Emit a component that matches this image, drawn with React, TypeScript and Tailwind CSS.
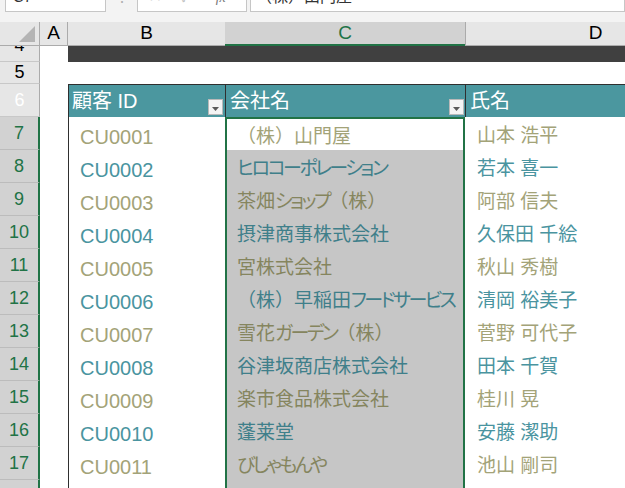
import React from 'react';

type Row = { id: string; company: string; name: string };

const rows: Row[] = [
  { id: 'CU0001', company: '（株）山門屋', name: '山本 浩平' },
  { id: 'CU0002', company: 'ヒロコーポレーション', name: '若本 喜一' },
  { id: 'CU0003', company: '茶畑ショップ（株）', name: '阿部 信夫' },
  { id: 'CU0004', company: '摂津商事株式会社', name: '久保田 千絵' },
  { id: 'CU0005', company: '宮株式会社', name: '秋山 秀樹' },
  { id: 'CU0006', company: '（株）早稲田フードサービス', name: '清岡 裕美子' },
  { id: 'CU0007', company: '雪花ガーデン（株）', name: '菅野 可代子' },
  { id: 'CU0008', company: '谷津坂商店株式会社', name: '田本 千賀' },
  { id: 'CU0009', company: '楽市食品株式会社', name: '桂川 晃' },
  { id: 'CU0010', company: '蓬莱堂', name: '安藤 潔助' },
  { id: 'CU0011', company: 'びしゃもんや', name: '池山 剛司' },
  { id: '', company: '', name: '' },
];

// kana gets proportional widths, like the UI font in the screenshot
function Jp({ text }: { text: string }) {
  const parts = text.split(/([\u3040-\u30FF]+)/);
  return (
    <>
      {parts.map((p, i) =>
        /[\u3040-\u30FF]/.test(p) ? (
          <span key={i} className="[font-feature-settings:'palt'] tracking-[-2.5px]">
            {p}
          </span>
        ) : (
          <React.Fragment key={i}>{p}</React.Fragment>
        )
      )}
    </>
  );
}

function FilterButton() {
  return (
    <div className="self-end mb-[2px] w-[15px] h-[16px] bg-[#f4f4f4] border border-[#b9b9b9] flex items-center justify-center shrink-0">
      <svg width="7" height="4" viewBox="0 0 7 4" className="mt-[3px]">
        <path d="M0 0h7L3.5 4z" fill="#595959" />
      </svg>
    </div>
  );
}

function FormulaBar() {
  return (
    <div className="h-[12px] overflow-hidden bg-[#f3f3f3]">
      <div className="-mt-[18px] h-[30px] flex">
        <div className="ml-[5px] w-[101px] bg-white border border-[#c6c6c6] flex items-center justify-between pl-[7px] pr-[6px]">
          <span className="text-[15px] text-[#333]">C7</span>
          <svg width="7" height="4" viewBox="0 0 7 4">
            <path d="M0 0h7L3.5 4z" fill="#777" />
          </svg>
        </div>
        <div className="w-[31px] flex items-center justify-center text-[16px] text-[#b0b0b0]">⋮</div>
        <div className="w-[110px] bg-white border border-[#c6c6c6] flex items-center text-[#c4c4c4]">
          <span className="ml-[10px] text-[17px]">✕</span>
          <span className="ml-[18px] text-[17px]">✓</span>
          <span className="ml-[24px] text-[14px] italic font-['Liberation_Serif',serif] text-[#777]">fx</span>
        </div>
        <div className="ml-[3px] flex-1 bg-white border border-[#c6c6c6] flex items-center pl-[5px] text-[16px] text-[#333]">
          （株）山門屋
        </div>
      </div>
    </div>
  );
}

function ColumnHeaders() {
  return (
    <div className="flex h-[24px] bg-[#e6e6e6] text-[19px]">
      <div className="w-[40px] shrink-0 border-r border-b border-[#ababab] flex items-end justify-end pr-[4px] pb-[3px]">
        <svg width="16" height="16" viewBox="0 0 16 16">
          <path d="M16 0V16H0z" fill="#b4b4b4" />
        </svg>
      </div>
      <div className="w-[28px] shrink-0 border-r border-b border-[#ababab] flex items-center justify-center">A</div>
      <div className="w-[157px] shrink-0 border-b border-[#ababab] flex items-center justify-center">B</div>
      <div className="w-[240px] shrink-0 bg-[#d2d2d2] text-[#217346] border-b-2 border-[#217346] flex items-center justify-center">
        C
      </div>
      <div className="w-[260px] shrink-0 border-l border-b border-[#ababab] flex items-center justify-center">D</div>
    </div>
  );
}

function RowHead({ n, active }: { n: number; active?: boolean }) {
  return active ? (
    <div className="w-[40px] shrink-0 bg-[#d2d2d2] text-[#217346] border-r-2 border-r-[#217346] border-b border-b-[#bcbcbc] flex items-center justify-center text-[18px]">
      {n}
    </div>
  ) : (
    <div className="w-[40px] shrink-0 bg-[#e6e6e6] border-r border-r-[#ababab] border-b border-b-[#c8c8c8] flex items-center justify-center text-[18px]">
      {n}
    </div>
  );
}

export default function App() {
  return (
    <div className="w-[625px] h-[488px] overflow-hidden bg-white text-black font-['Liberation_Sans','Noto_Sans_CJK_JP',sans-serif]">
      <FormulaBar />
      <div className="h-[10px] bg-[#f3f3f3]" />
      <ColumnHeaders />

      {/* row 4, scrolled partly out of view */}
      <div className="flex h-[16px]">
        <div className="w-[40px] shrink-0 bg-[#e6e6e6] border-r border-r-[#ababab] border-b border-b-[#c8c8c8] overflow-hidden">
          <div className="-mt-[15px] h-[29px] flex items-center justify-center text-[18px]">4</div>
        </div>
        <div className="w-[28px] shrink-0" />
        <div className="flex-1 bg-[#404040]" />
      </div>

      {/* row 5 */}
      <div className="flex h-[22px]">
        <RowHead n={5} />
        <div className="flex-1" />
      </div>

      {/* row 6: table header */}
      <div className="flex h-[33px] text-white text-[20px]">
        <RowHead n={6} />
        <div className="w-[28px] shrink-0" />
        <div className="w-[157px] shrink-0 bg-[#4b979f] border-l border-t border-[#2f2f2f] flex items-center pl-[3px] pr-[2px]">
          <span className="flex-1">顧客 ID</span>
          <FilterButton />
        </div>
        <div className="w-[240px] shrink-0 bg-[#4b979f] border-l border-t border-[#2f2f2f] flex items-center pl-[4px] pr-[1px]">
          <span className="flex-1">会社名</span>
          <FilterButton />
        </div>
        <div className="w-[260px] shrink-0 bg-[#4b979f] border-l border-t border-[#2f2f2f] flex items-center pl-[4px]">
          氏名
        </div>
      </div>

      {/* body rows */}
      {rows.map((r, i) => {
        const n = 7 + i;
        const odd = n % 2 === 1;
        const first = i === 0;
        return (
          <div key={n} className="flex h-[33px] text-[19px]">
            <RowHead n={n} active />
            <div className="w-[28px] shrink-0" />
            <div
              className={
                'w-[157px] shrink-0 border-l border-[#2f2f2f] flex items-center pt-[6px] pl-[11px] text-[20px] ' +
                (odd ? 'text-[#a3a378]' : 'text-[#4a94a0]')
              }
            >
              {r.id}
            </div>
            <div
              className={
                'w-[240px] shrink-0 border-x-2 border-[#217346] flex items-center pt-[6px] pl-[10px] whitespace-nowrap overflow-hidden ' +
                (first
                  ? 'bg-white border-t-2 text-[#a3a378]'
                  : odd
                    ? 'bg-[#c6c6c6] text-[#85855e]'
                    : 'bg-[#c6c6c6] text-[#3f7f8a]')
              }
            >
              <Jp text={r.company} />
            </div>
            <div
              className={
                'w-[260px] shrink-0 flex items-center pt-[6px] pl-[12px] ' +
                (odd ? 'text-[#a3a378]' : 'text-[#4a94a0]')
              }
            >
              {r.name}
            </div>
          </div>
        );
      })}
    </div>
  );
}
